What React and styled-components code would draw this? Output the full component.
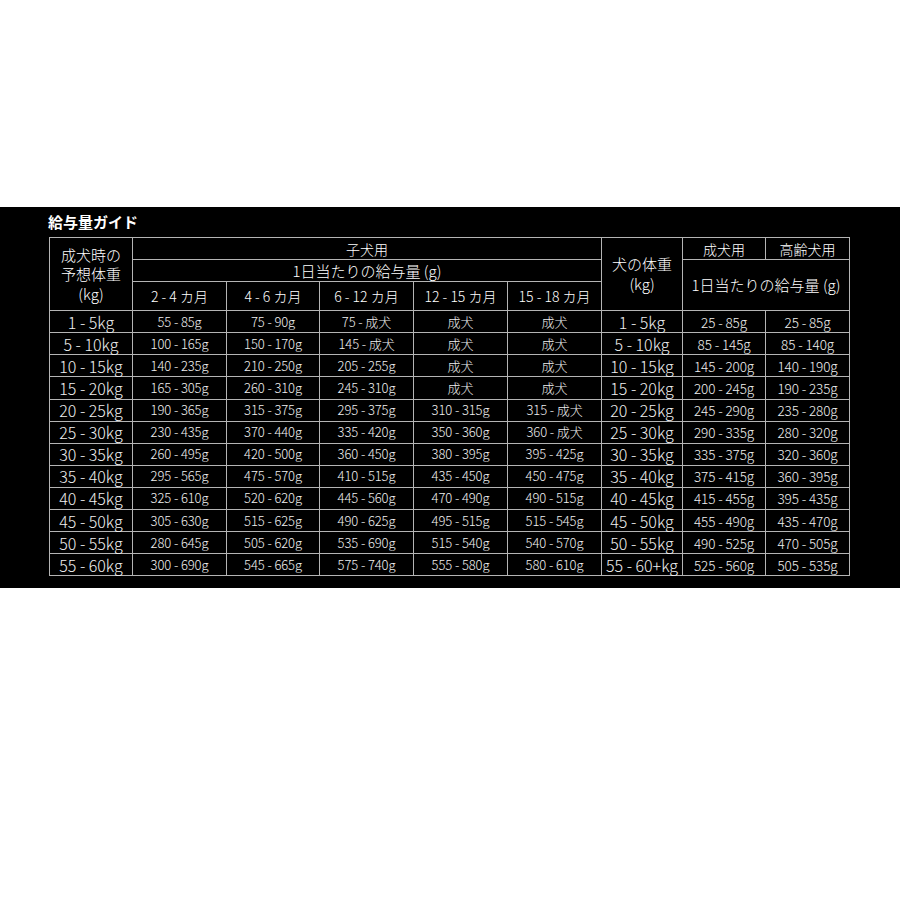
import styled, { createGlobalStyle } from "styled-components";

const GlobalStyle = createGlobalStyle`
  body {
    margin: 0;
    background: #fff;
    font-family: "Noto Sans CJK JP", "Noto Sans", sans-serif;
  }
`;

const Band = styled.section`
  margin-top: 207px;
  background: #000;
  padding: 6px 0 12px 49px;
  color: #f0f0f0;
`;

const Title = styled.h2`
  margin: 0 0 6px -1px;
  font-size: 15px;
  line-height: 18px;
  font-weight: 700;
  color: #fff;
`;

const Table = styled.table`
  border-collapse: collapse;
  table-layout: fixed;
  width: 801px;
`;

const Col = styled.col`
  width: ${(p) => p.$w}px;
`;

const Cell = styled.td`
  border: 1px solid #b4b4b4;
  padding: 0;
  text-align: center;
  vertical-align: middle;
  white-space: nowrap;
  font-weight: 300;
  height: ${(p) => p.$h || 21.1}px;
  font-size: ${(p) => p.$size || 13}px;
  line-height: ${(p) => p.$lh || 20}px;
  letter-spacing: ${(p) => (p.$tight ? "-0.1px" : "0")};
`;

const HeadCell = styled(Cell).attrs({ as: "th" })`
  font-weight: 300;
  color: #fff;
`;

const cols = [83, 94, 93, 94, 94, 94, 81, 83, 84];

const rows = [
  ["1 - 5kg", "55 - 85g", "75 - 90g", "75 - 成犬", "成犬", "成犬", "1 - 5kg", "25 - 85g", "25 - 85g"],
  ["5 - 10kg", "100 - 165g", "150 - 170g", "145 - 成犬", "成犬", "成犬", "5 - 10kg", "85 - 145g", "85 - 140g"],
  ["10 - 15kg", "140 - 235g", "210 - 250g", "205 - 255g", "成犬", "成犬", "10 - 15kg", "145 - 200g", "140 - 190g"],
  ["15 - 20kg", "165 - 305g", "260 - 310g", "245 - 310g", "成犬", "成犬", "15 - 20kg", "200 - 245g", "190 - 235g"],
  ["20 - 25kg", "190 - 365g", "315 - 375g", "295 - 375g", "310 - 315g", "315 - 成犬", "20 - 25kg", "245 - 290g", "235 - 280g"],
  ["25 - 30kg", "230 - 435g", "370 - 440g", "335 - 420g", "350 - 360g", "360 - 成犬", "25 - 30kg", "290 - 335g", "280 - 320g"],
  ["30 - 35kg", "260 - 495g", "420 - 500g", "360 - 450g", "380 - 395g", "395 - 425g", "30 - 35kg", "335 - 375g", "320 - 360g"],
  ["35 - 40kg", "295 - 565g", "475 - 570g", "410 - 515g", "435 - 450g", "450 - 475g", "35 - 40kg", "375 - 415g", "360 - 395g"],
  ["40 - 45kg", "325 - 610g", "520 - 620g", "445 - 560g", "470 - 490g", "490 - 515g", "40 - 45kg", "415 - 455g", "395 - 435g"],
  ["45 - 50kg", "305 - 630g", "515 - 625g", "490 - 625g", "495 - 515g", "515 - 545g", "45 - 50kg", "455 - 490g", "435 - 470g"],
  ["50 - 55kg", "280 - 645g", "505 - 620g", "535 - 690g", "515 - 540g", "540 - 570g", "50 - 55kg", "490 - 525g", "470 - 505g"],
  ["55 - 60kg", "300 - 690g", "545 - 665g", "575 - 740g", "555 - 580g", "580 - 610g", "55 - 60+kg", "525 - 560g", "505 - 535g"],
];

const ages = ["2 - 4 カ月", "4 - 6 カ月", "6 - 12 カ月", "12 - 15 カ月", "15 - 18 カ月"];

function sizeFor(i) {
  if (i === 0 || i === 6) return 16;
  if (i >= 7) return 13.5;
  return 13;
}

export default function App() {
  return (
    <>
      <GlobalStyle />
      <Band>
        <Title>給与量ガイド</Title>
        <Table>
          <colgroup>
            {cols.map((w, i) => (
              <Col key={i} $w={w} />
            ))}
          </colgroup>
          <thead>
            <tr>
              <HeadCell rowSpan={3} $size={15} $lh={19.5}>
                成犬時の
                <br />
                予想体重
                <br />
                (kg)
              </HeadCell>
              <HeadCell colSpan={5} $size={14}>
                子犬用
              </HeadCell>
              <HeadCell rowSpan={3} $size={15}>
                犬の体重
                <br />
                (kg)
              </HeadCell>
              <HeadCell $size={14}>成犬用</HeadCell>
              <HeadCell $size={14}>高齢犬用</HeadCell>
            </tr>
            <tr>
              <HeadCell colSpan={5} $size={15}>
                1日当たりの給与量 (g)
              </HeadCell>
              <HeadCell colSpan={2} rowSpan={2} $size={15}>
                1日当たりの給与量 (g)
              </HeadCell>
            </tr>
            <tr>
              {ages.map((a) => (
                <HeadCell key={a} $h={28} $size={14}>
                  {a}
                </HeadCell>
              ))}
            </tr>
          </thead>
          <tbody>
            {rows.map((r) => (
              <tr key={r[0]}>
                {r.map((v, i) => (
                  <Cell key={i} $size={sizeFor(i)} $tight={i > 0 && i !== 6}>
                    {v}
                  </Cell>
                ))}
              </tr>
            ))}
          </tbody>
        </Table>
      </Band>
    </>
  );
}
